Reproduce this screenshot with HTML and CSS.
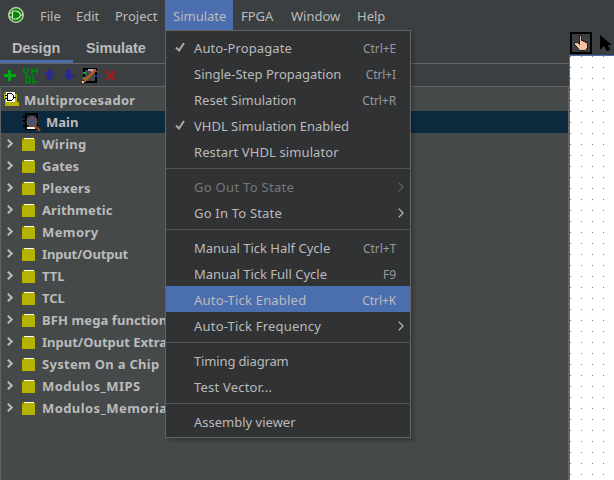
FILE: index.html
```html
<!DOCTYPE html>
<html lang="en">
<head>
<meta charset="utf-8">
<title>Multiprocesador</title>
<link rel="stylesheet" href="styles.css">
</head>
<body>
<svg class="defs" width="0" height="0">
  <symbol id="folder" viewBox="0 0 14 14"><path fill="#808000" d="M0 1h4l2 2v1H0z"/><path fill="#fff" d="M2 1h10v1H2z"/><path fill="#b3b300" d="M0 3h2V2h11v12H0z"/></symbol>
  <symbol id="chev" viewBox="0 0 6 9"><path d="M.8.8 4.7 4.5.8 8.2" fill="none" stroke="currentColor" stroke-width="2"/></symbol>
  <symbol id="sub" viewBox="0 0 6 10"><path d="M.7.7 5 5 .7 9.3" fill="none" stroke="currentColor" stroke-width="1.2"/></symbol>
  <symbol id="check" viewBox="0 0 10 10"><path d="M1 5.5 4 8.5 9 1" fill="none" stroke="currentColor" stroke-width="2"/></symbol>
</svg>
<div class="app">
  <nav class="menubar">
    <svg class="logo" width="16" height="16" viewBox="0 0 16 16"><circle cx="8" cy="8" r="7.3" fill="#078807" stroke="#ddd6ba" stroke-width="1.3"/><path d="M4.5 4h3.2q4 .5 5 4-1 3.5-5 4H4.5zM1 6h3.5M1 10h3.5M12.5 8H15" fill="none" stroke="#d8e8d0" stroke-width="1.1"/></svg>
    <span class="m file">File</span><span class="m edit">Edit</span><span class="m project">Project</span><span class="m sim">Simulate</span><span class="m fpga">FPGA</span><span class="m window">Window</span><span class="m help">Help</span>
  </nav>
  <div class="main">
    <section class="side">
      <div class="tabs"><span class="tab active">Design</span><span class="tab">Simulate</span></div>
      <div class="tools">
        <svg width="120" height="20" viewBox="0 0 120 20" shape-rendering="crispEdges">
          <path fill="#00a813" d="M8 6h3v4h5v3h-5v4H8v-4H4v-3h4z"/>
          <path fill="none" stroke="#008212" stroke-width="1.5" d="M24 4v3l2 3 2-3V4M32 4v6M37 4v6M32 7h5M26 12v7h2l2-2v-3l-2-2zM33 11v7h4"/>
          <path fill="#29298e" d="M49 5l6 6h-3v5h-5v-5h-4zM69 17l-6-6h3V6h5v5h4z"/>
          <path fill="#45494a" stroke="#000" stroke-width="2" d="M84 5h12v13H84z"/><path fill="#aaa" d="M88 5h7v2h-2v2h-2V7h-3z"/><path stroke="#00c000" stroke-width="2" d="M83 9h3M83 14h3"/><path stroke="#2020d0" stroke-width="2" d="M95 12h3"/><path stroke="#ab5828" stroke-width="3" d="M84 17 96 6"/><path fill="#eed0a0" d="M82 17h2v2h-2z"/>
          <path stroke="#8b2424" stroke-width="3" d="m106 7 9 9m0-9-9 9"/>
        </svg>
      </div>
      <div class="tree">
        <div class="row root"><svg width="15" height="15" viewBox="0 0 15 15" shape-rendering="crispEdges"><path fill="#808000" d="M0 1h5v3H0z"/><path fill="#b3b300" d="M0 3h2v8h9V3h2v8h2v4H1V8H0z"/><path fill="#fff" d="M2 1h9v10H2z"/><path d="M3.500 2.500h4l2 2v3l-2 2h-4zM1 4.500h2M1 7.500h2M10 6.500h2" fill="none" stroke="#000"/></svg><span class="t0 w3">Multiprocesador</span></div>
        <div class="row main-row"><svg width="18" height="19" viewBox="0 0 18 19"><path fill="none" stroke="#000" stroke-width="2" d="M3 1h11v15H3zM0 4h3M0 8h3M0 13h3"/><path fill="#fff" d="M4 14h8v2H4z"/><path stroke="#944712" stroke-width="2.500" d="m12 13 5 5"/><circle cx="9" cy="8.500" r="5" fill="#435573" stroke="#874b2a" stroke-width="1.200"/></svg><span>Main</span></div>
        <div class="row"><svg class="chev"><use href="#chev"/></svg><svg class="folder"><use href="#folder"/></svg><span class="w3">Wiring</span></div>
        <div class="row"><svg class="chev"><use href="#chev"/></svg><svg class="folder"><use href="#folder"/></svg><span>Gates</span></div>
        <div class="row"><svg class="chev"><use href="#chev"/></svg><svg class="folder"><use href="#folder"/></svg><span class="w3">Plexers</span></div>
        <div class="row"><svg class="chev"><use href="#chev"/></svg><svg class="folder"><use href="#folder"/></svg><span class="w1">Arithmetic</span></div>
        <div class="row"><svg class="chev"><use href="#chev"/></svg><svg class="folder"><use href="#folder"/></svg><span class="w4">Memory</span></div>
        <div class="row"><svg class="chev"><use href="#chev"/></svg><svg class="folder"><use href="#folder"/></svg><span class="n1">Input/Output</span></div>
        <div class="row"><svg class="chev"><use href="#chev"/></svg><svg class="folder"><use href="#folder"/></svg><span>TTL</span></div>
        <div class="row"><svg class="chev"><use href="#chev"/></svg><svg class="folder"><use href="#folder"/></svg><span>TCL</span></div>
        <div class="row"><svg class="chev"><use href="#chev"/></svg><svg class="folder"><use href="#folder"/></svg><span class="w1">BFH mega functions</span></div>
        <div class="row"><svg class="chev"><use href="#chev"/></svg><svg class="folder"><use href="#folder"/></svg><span>Input/Output Extra</span></div>
        <div class="row"><svg class="chev"><use href="#chev"/></svg><svg class="folder"><use href="#folder"/></svg><span class="w3">System On a Chip</span></div>
        <div class="row"><svg class="chev"><use href="#chev"/></svg><svg class="folder"><use href="#folder"/></svg><span class="w4">Modulos_MIPS</span></div>
        <div class="row"><svg class="chev"><use href="#chev"/></svg><svg class="folder"><use href="#folder"/></svg><span class="w4">Modulos_Memoria</span></div>
      </div>
    </section>
    <section class="work">
      <div class="work-tools">
        <svg width="44" height="24" viewBox="0 0 44 24"><path d="M1 3h20v20H1z" fill="#3c3f41" stroke="#000" stroke-width="2"/><path d="M9.500 5.500h2v5h2v1h2v1h2v5l-2 3h-6l-2-3-3-3v-2h3l2 2z" fill="#f6bfa5" stroke="#000" stroke-width=".8"/><path d="M30 5v15l4-4 3 5 3-1-2-5h4z" fill="#000"/></svg>
      </div>
      <div class="canvas"></div>
    </section>
  </div>
  <div class="popup">
    <div class="item"><svg class="check"><use href="#check"/></svg><span class="w1">Auto-Propagate</span><kbd>Ctrl+E</kbd></div>
    <div class="item"><span>Single-Step Propagation</span><kbd>Ctrl+I</kbd></div>
    <div class="item"><span>Reset Simulation</span><kbd>Ctrl+R</kbd></div>
    <div class="item"><svg class="check"><use href="#check"/></svg><span>VHDL Simulation Enabled</span></div>
    <div class="item"><span class="w1">Restart VHDL simulator</span></div>
    <div class="sep"></div>
    <div class="item off"><span class="w3">Go Out To State</span><svg class="sub"><use href="#sub"/></svg></div>
    <div class="item"><span class="w2">Go In To State</span><svg class="sub"><use href="#sub"/></svg></div>
    <div class="sep"></div>
    <div class="item"><span>Manual Tick Half Cycle</span><kbd>Ctrl+T</kbd></div>
    <div class="item"><span>Manual Tick Full Cycle</span><kbd>F9</kbd></div>
    <div class="item on"><span class="w2">Auto-Tick Enabled</span><kbd>Ctrl+K</kbd></div>
    <div class="item"><span class="w2">Auto-Tick Frequency</span><svg class="sub"><use href="#sub"/></svg></div>
    <div class="sep"></div>
    <div class="item"><span class="n1">Timing diagram</span></div>
    <div class="item"><span class="w2">Test Vector...</span></div>
    <div class="sep"></div>
    <div class="item"><span>Assembly viewer</span></div>
  </div>
</div>
</body>
</html>
```
FILE: styles.css
```css
* { box-sizing: border-box; }
body { margin: 0; background: #3c3f41; color: #bbb; font: 13px/20px "Noto Sans", "Open Sans", sans-serif; }
.defs { position: absolute; }
.app { position: relative; width: 614px; height: 480px; overflow: hidden; display: flex; flex-direction: column; }
.menubar { height: 30px; flex: none; display: flex; align-items: stretch; line-height: 32px; padding-left: 8px; }
.logo { margin: 7px 8px 0 0; }
.m { padding-left: 8px; white-space: nowrap; }
.file { width: 36px; } .edit { width: 39px; } .project { width: 58px; }
.sim { width: 68px; background: #4b6eaf; }
.fpga { width: 50px; } .window { width: 66px; }
.w1 { letter-spacing: .1px; }
.w2 { letter-spacing: .2px; }
.w3 { letter-spacing: .3px; }
.w4 { letter-spacing: .42px; }
.n1 { letter-spacing: -.15px; }
.main { flex: 1; display: flex; min-height: 0; }
.side { width: 569px; display: flex; flex-direction: column; }
.tabs { height: 34px; display: flex; border-bottom: 1px solid #616365; font: bold 14.5px/36px "Liberation Sans", sans-serif; }
.tab { width: 73px; padding-left: 12px; }
.tab.active { border-bottom: 3px solid #4b6eaf; }
.tab + .tab { padding-left: 13px; letter-spacing: -.1px; }
.tools { height: 22px; }
.tools svg { display: block; }
.tree { flex: 1; border: 1px solid #616365; border-bottom: 0; background: #45494a; padding-top: 2px; font-weight: bold; font-size: 13px; }
.row { height: 22px; display: flex; align-items: center; padding-left: 6px; white-space: nowrap; }
.root { padding-left: 3px; }
.root svg { margin-bottom: 3px; }
.root span { margin-left: 5px; }
.main-row { background: #0d293e; padding-left: 22px; }
.main-row span { margin-left: 5px; }
.chev { width: 6px; height: 9px; margin: 0 9px 1px 0; }
.folder { width: 14px; height: 14px; margin-right: 6px; }
.work { flex: 1; display: flex; flex-direction: column; }
.work-tools { height: 25px; }
.work-tools svg { display: block; margin-left: 1px; }
.canvas { flex: 1; border: 1px solid #4b6eaf; border-width: 1px 0 0 1px; background: conic-gradient(from 270deg at 1px 1px, #777 90deg, #fff 0) 0 0 / 11px 11px; }
.popup { position: absolute; left: 165px; top: 30px; width: 246px; height: 408px; background: #303234; border: 1px solid #616365; padding: 3px 0; box-shadow: 3px 3px 3px rgba(0,0,0,.2); }
.item { height: 26px; display: flex; align-items: center; padding: 2px 14px 0 28px; white-space: nowrap; }
.item kbd { font: 12px "Noto Sans", sans-serif; letter-spacing: -.1px; margin-left: auto; color: #999; }
.item.on { background: #4b6eaf; }
.item.on kbd { color: #bbb; }
.item.off { color: #777; }
.check { width: 10px; height: 10px; margin: 0 9px 2px -19px; color: #aaa; }
.sub { width: 6px; height: 10px; margin: 0 -8px 1px auto; }
.off .sub { color: #606263; }
.sep { height: 9px; border-bottom: 4px solid transparent; border-top: 4px solid transparent; background: #515355; background-clip: padding-box; }
```
